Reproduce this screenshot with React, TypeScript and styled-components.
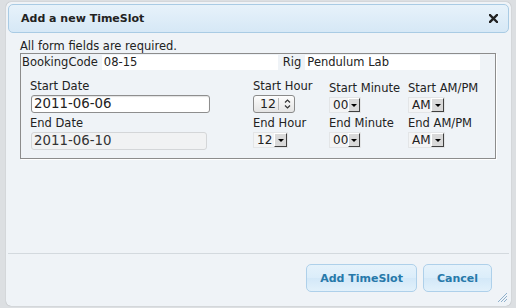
import React from "react";
import styled, { createGlobalStyle } from "styled-components";

const GlobalStyle = createGlobalStyle`
  html, body { margin: 0; padding: 0; }
  body {
    background: #dcdfe2;
    font-family: "DejaVu Sans", Verdana, sans-serif;
    overflow: hidden;
  }
`;

const Page = styled.div`
  width: 516px;
  height: 308px;
  box-sizing: border-box;
  padding: 2px 0 0 6px;
`;

const Dialog = styled.div`
  position: relative;
  width: 505px;
  height: 304px;
  box-sizing: border-box;
  padding: 2px;
  background: #eff3f7;
  border-radius: 5px;
  box-shadow: 0 0 1px rgba(0, 0, 0, 0.35);
  display: flex;
  flex-direction: column;
`;

const TitleBar = styled.div`
  height: 29px;
  box-sizing: border-box;
  border: 1px solid #a9cbe4;
  border-radius: 5px;
  background: linear-gradient(#e7f2fa, #d6e8f6);
  display: flex;
  align-items: center;
  justify-content: space-between;
  padding: 0 10px 0 12px;
`;

const Title = styled.span`
  font-size: 11px;
  font-weight: bold;
  color: #222;
`;

const CloseIcon = styled.svg`
  width: 9px;
  height: 9px;
  display: block;
`;

const Content = styled.div`
  flex: 1;
  padding: 6px 13px 0 12px;
  font-size: 11.5px;
  color: #222;
`;

const Hint = styled.div`
  line-height: 14px;
`;

const FormBox = styled.div`
  border: 1px solid #8c8c8c;
  box-shadow: 1px 1px 0 #fff;
  padding: 1px 0 8px 1px;
`;

const CodeRow = styled.div`
  display: flex;
  align-items: center;
  height: 15px;
`;

const CodeLabel = styled.span<{ $gap: number }>`
  line-height: 15px;
  margin-right: ${(p) => p.$gap}px;
`;

const CodeField = styled.span<{ $w: number; $after?: number }>`
  width: ${(p) => p.$w}px;
  height: 15px;
  line-height: 15px;
  background: #fff;
  padding-left: 2px;
  box-sizing: border-box;
  margin-right: ${(p) => p.$after ?? 0}px;
`;

const TimeGrid = styled.div`
  display: grid;
  grid-template-columns: 223px 76px 79px auto;
  row-gap: 3px;
  padding: 9px 0 0 8px;
`;

const Cell = styled.div<{ $end?: boolean }>`
  display: flex;
  flex-direction: column;
  align-items: flex-start;
  align-self: ${(p) => (p.$end ? "end" : "start")};
`;

const Label = styled.div`
  line-height: 14px;
  margin-bottom: 2px;
  white-space: nowrap;
`;

const DateInput = styled.div<{ $w: number; $disabled?: boolean }>`
  width: ${(p) => p.$w}px;
  height: 18px;
  box-sizing: border-box;
  margin-left: 1px;
  border: 1px solid ${(p) => (p.$disabled ? "#d4d6d8" : "#8e8e8e")};
  border-radius: 3px;
  background: ${(p) => (p.$disabled ? "#f1f2f3" : "#fff")};
  box-shadow: ${(p) => (p.$disabled ? "none" : "inset 0 1px 1px rgba(0,0,0,0.12)")};
  padding: 0 2px;
  font-size: 13.33px;
  line-height: 16px;
  color: ${(p) => (p.$disabled ? "#333" : "#222")};
`;

const Spinner = styled.div`
  width: 42px;
  height: 18px;
  box-sizing: border-box;
  border: 1px solid #8a8a8a;
  border-radius: 3px;
  background: linear-gradient(#fdfdfd, #e4e4e4);
  display: flex;
  align-items: center;
  font-size: 12.5px;
  color: #222;
  padding-left: 6px;
`;

const SpinText = styled.span`
  padding-right: 2px;
  border-right: 1px solid #b8b8b8;
  line-height: 12px;
`;

const SpinIcon = styled.svg`
  width: 7px;
  height: 10px;
  margin-left: 5px;
  display: block;
`;

const Select = styled.div<{ $w: number }>`
  width: ${(p) => p.$w}px;
  height: 16px;
  box-sizing: border-box;
  display: flex;
  background: #f3f4f5;
  border: 1px solid #e3e5e7;
  font-size: 12px;
  color: #222;
`;

const SelectText = styled.span`
  flex: 1;
  line-height: 14px;
  padding-left: 3px;
`;

const SelectArrow = styled.span`
  width: 13px;
  box-sizing: border-box;
  background: #d9d9d9;
  border-top: 1px solid #fff;
  border-left: 1px solid #fff;
  border-right: 1px solid #404040;
  border-bottom: 1px solid #404040;
  display: flex;
  align-items: center;
  justify-content: center;
  &::after {
    content: "";
    border-left: 3px solid transparent;
    border-right: 3px solid transparent;
    border-top: 3px solid #000;
    margin-top: 1px;
  }
`;

const ButtonPane = styled.div`
  border-top: 1px solid #d3d9de;
  display: flex;
  justify-content: flex-end;
  gap: 6px;
  padding: 10px 17px 12px 0;
`;

const Button = styled.button`
  height: 28px;
  box-sizing: border-box;
  border: 1px solid #aed0ea;
  border-radius: 5px;
  background: linear-gradient(#e5f2fb 0%, #dbedfa 50%, #d3e8f8 51%, #e2f1fb 100%);
  color: #2779aa;
  font-family: "DejaVu Sans", Verdana, sans-serif;
  font-size: 11px;
  font-weight: bold;
  padding: 0 13px;
  cursor: pointer;
`;

const Grip = styled.svg`
  position: absolute;
  right: 3px;
  bottom: 3px;
  width: 11px;
  height: 11px;
`;

function ArrowSelect({ value, w }: { value: string; w: number }) {
  return (
    <Select $w={w}>
      <SelectText>{value}</SelectText>
      <SelectArrow />
    </Select>
  );
}

export default function App() {
  return (
    <>
      <GlobalStyle />
      <Page>
        <Dialog>
          <TitleBar>
            <Title>Add a new TimeSlot</Title>
            <CloseIcon viewBox="0 0 9 9">
              <path d="M1 1 L8 8 M8 1 L1 8" stroke="#222" strokeWidth="2.4" strokeLinecap="square" />
            </CloseIcon>
          </TitleBar>
          <Content>
            <Hint>All form fields are required.</Hint>
            <FormBox>
              <CodeRow>
                <CodeLabel $gap={4}>BookingCode</CodeLabel>
                <CodeField $w={176} $after={5}>08-15</CodeField>
                <CodeLabel $gap={4}>Rig</CodeLabel>
                <CodeField $w={175}>Pendulum Lab</CodeField>
              </CodeRow>
              <TimeGrid>
                <Cell $end>
                  <Label>Start Date</Label>
                  <DateInput $w={179}>2011-06-06</DateInput>
                </Cell>
                <Cell $end>
                  <Label>Start Hour</Label>
                  <Spinner>
                    <SpinText>12</SpinText>
                    <SpinIcon viewBox="0 0 7 10">
                      <path d="M1 3.5 L3.5 1 L6 3.5 M1 6.5 L3.5 9 L6 6.5" fill="none" stroke="#333" strokeWidth="1.2" />
                    </SpinIcon>
                  </Spinner>
                </Cell>
                <Cell $end>
                  <Label>Start Minute</Label>
                  <ArrowSelect value="00" w={32} />
                </Cell>
                <Cell $end>
                  <Label>Start AM/PM</Label>
                  <ArrowSelect value="AM" w={37} />
                </Cell>
                <Cell>
                  <Label>End Date</Label>
                  <DateInput $w={176} $disabled>2011-06-10</DateInput>
                </Cell>
                <Cell>
                  <Label>End Hour</Label>
                  <ArrowSelect value="12" w={35} />
                </Cell>
                <Cell>
                  <Label>End Minute</Label>
                  <ArrowSelect value="00" w={32} />
                </Cell>
                <Cell>
                  <Label>End AM/PM</Label>
                  <ArrowSelect value="AM" w={37} />
                </Cell>
              </TimeGrid>
            </FormBox>
          </Content>
          <ButtonPane>
            <Button>Add TimeSlot</Button>
            <Button>Cancel</Button>
          </ButtonPane>
          <Grip viewBox="0 0 11 11">
            <path d="M10 1 L1 10 M10 4 L4 10 M10 7 L7 10" stroke="#8fb0cc" strokeWidth="1" />
          </Grip>
        </Dialog>
      </Page>
    </>
  );
}
